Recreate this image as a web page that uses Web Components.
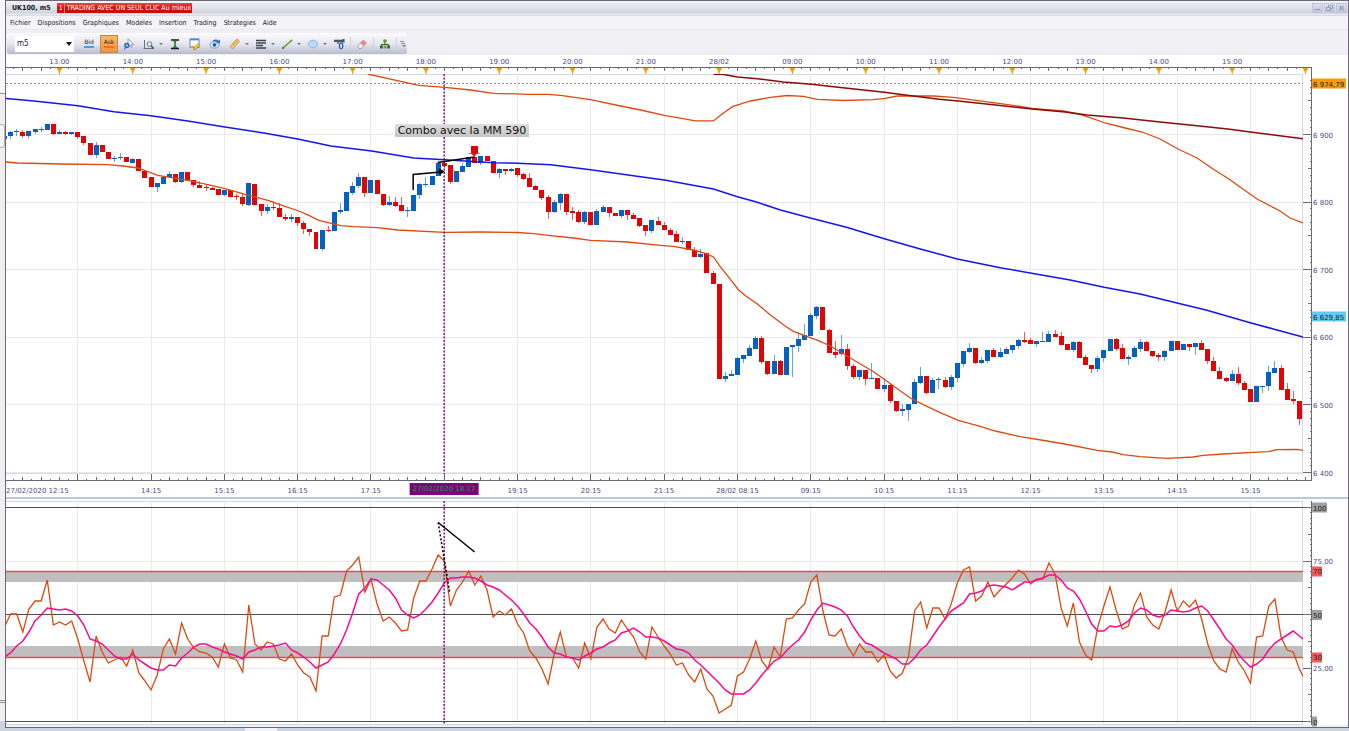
<!DOCTYPE html>
<html lang="fr">
<head>
<meta charset="utf-8">
<title>UK100, m5</title>
<style>
  body {
    margin: 0;
    background: #ccd4e0;
    color: #1c1c24;
    font-family: "DejaVu Sans Condensed", "DejaVu Sans", sans-serif;
    font-size: 7px;
    line-height: 12px;
    --frame: #6c687a;
    --chrome: #f0eff4;
    --axis: #6a6a72;
    --axis-text: #4c4c84;
    --axis-font: 7px "DejaVu Sans", sans-serif;
    --grid: #e9e9e9;
    --plot-border: #d3dae6;
  }
</style>
</head>
<body>
<trading-app>
  <title-bar slot="title" name="UK100, m5" count="1">TRADING AVEC UN SEUL CLIC Au mieux</title-bar>
  <menu-bar slot="menu">
    <a href="#fichier">Fichier</a>
    <a href="#dispositions">Dispositions</a>
    <a href="#graphiques">Graphiques</a>
    <a href="#modeles">Modeles</a>
    <a href="#insertion">Insertion</a>
    <a href="#trading">Trading</a>
    <a href="#strategies">Strategies</a>
    <a href="#aide">Aide</a>
  </menu-bar>
  <tool-bar slot="tools"></tool-bar>
  <price-pane slot="price"></price-pane>
  <oscillator-pane slot="oscillator"></oscillator-pane>
</trading-app>

<script>
// ---- Scales ----------------------------------------------------------

const PLOT_W = 1298;      // horizontal units of a pane
const BAR_0 = -1.5;       // centre of the first bar
const BAR_W = 6.1125;     // one 5 minute bar
const HOUR = BAR_W * 12;

const barX = i => +(BAR_0 + BAR_W * i).toFixed(2);
const pctX = x => (x / PLOT_W * 100).toFixed(3) + '%';

const PRICE_TOP = 74, PRICE_H = 400;
const OSC_TOP = 501, OSC_H = 224;

// ---- Data ------------------------------------------------------------

// direction, body top, body bottom, high, low (pane units)
const CANDLES = `
u136,139,135,139 u132,136,131,139 u131,132,129,136 d132,136,130,138 u131,136,131,139 u129,132,129,134 u129,130,127,132 u124,130
d124,134,124,135 u132,134,130,134 d132,134,131,135 u132,134,132,135 d132,137,132,139 d136,143,136,145 d143,155 u145,155,142,158
d145,152 d152,159 u158,159,156,162 u157,158,153,160 d157,162 u159,163,158,163 d159,171 d171,178 d177,187 u183,187,183,192
u177,184 u174,177,171,177 d174,182,174,183 u172,182,172,183 d172,180 d180,185,180,187 d185,188,181,188 d187,188,185,191
d188,190,187,190 d189,195 u190,195,190,196 d190,197 d196,197,194,200 d197,204,193,206 u183,205,183,206 d184,205 d204,211,204,216
u207,211,204,214 d207,208,201,210 d208,217,203,217 d217,219,214,221 u217,219,214,222 d217,223,217,226 d223,229,221,234
d229,232,229,236 d232,249 u230,249,230,251 d230,231,226,232 u212,231 u210,212,203,214 u192,211 u186,193,182,195 u177,186,173,188
d177,193,177,197 u180,193 d180,194 d194,205,194,206 u202,205,196,206 d202,206,197,207 d205,211,197,211 u210,211,207,217
u195,211 u184,195,183,199 u184,185,177,187 u176,185 u163,176 d163,166,163,168 d165,182,165,184 u171,182 u166,172,163,172
u157,167 d157,163 u156,163,156,165 d156,161 d161,173 u169,173,168,178 d169,171,169,175 u169,171,168,172 d168,175,168,177
d174,179,173,180 d178,187,173,187 d186,190,185,190 d190,198,190,200 d197,212,195,219 u202,212,200,213 u194,203,193,210
d194,212,194,215 d211,213,207,220 d212,222,210,223 u212,222,211,224 d212,225 u211,225,209,225 u207,212,205,212 d207,213,207,217
d213,216 u210,216,210,218 d210,215,210,220 d215,219,213,219 d218,226,218,227 d225,231,225,236 u220,231,220,233 d221,225,217,225
d225,230,222,230 d230,235,228,235 d234,242,231,242 u241,242,237,244 d241,250 d250,257,247,257 u254,257,249,258 d253,273
d273,284,271,284 d284,379 u376,379,372,382 u374,376,370,376 u358,375,357,375 u355,359,355,363 u348,356,345,356 u338,349,336,349
d338,362,336,364 d361,374,361,375 u361,374,355,374 d361,375,360,375 u347,375 u345,347,345,377 u339,346,332,352 u335,340,324,340
u315,336,313,336 u307,316,306,319 d307,330 d330,353,329,353 d352,355,341,358 u349,354,335,356 d349,366,344,370 d366,377,364,379
u370,377,370,380 d370,379,370,385 u378,379,363,379 d378,389 u385,389,378,392 d385,401,383,403 d401,411,401,412 u409,411,404,416
u404,410,404,421 u382,404,379,404 u376,383,367,384 d376,393,376,394 u380,393,378,393 u379,380,377,389 d380,387,377,388
u377,387,375,390 u363,378,363,382 u351,364,351,367 u348,352,343,353 d348,363,348,364 u360,363,357,364 u350,361,350,363
d350,357,348,357 u352,357,348,358 u349,354,347,354 u345,350,345,353 u340,346,339,349 d340,342,332,343 d340,344,338,344
u341,344,341,347 u341,342,332,342 u334,342,331,342 d334,337,330,337 d336,345,332,345 d344,350 u342,350,341,352 d342,358,341,358
d357,365,355,365 d365,369,365,373 u358,369,356,372 u350,358,350,362 u339,351 d339,349,338,351 d348,359,344,359 u357,359,355,365
u348,357,346,357 u342,349,339,352 d342,351,341,351 d351,356,351,357 d355,357,353,361 u351,357,350,361 u341,351 d341,350
u344,350 d344,347,344,351 u343,347,343,355 d343,350,340,350 d349,361,349,364 d361,371,357,371 d371,379,367,379 d378,381,377,382
u374,381,370,381 d374,383,367,385 d383,390,381,390 d389,402 u386,402 u386,387,386,393 u372,386,366,391 u368,373,361,373
d368,390,365,390 d389,400,383,400 d399,401,391,404 d401,419,401,425`
  .trim().split(/\s+/).map(s => {
    const [top, bottom, high = top, low = bottom] = s.slice(1).split(',').map(Number);
    return { up: s[0] === 'u', top, bottom, high, low };
  });

// x,y pairs (pane units)
const AVERAGE_BLUE = '0,98.5 28,101 72,105.7 108,111.7 145,115.7 182,121 219,127 258,133 292,139 325,146 366,151 408,158 439,159.7 488,162.7 512,163.3 545,164.7 585,169.7 635,176.7 659,180 708,189 732,196.7 751,202 775,210 805,218 842,227.5 879,238.7 915,249 952,259 995,267.7 1025,273 1065,280 1099,287.3 1135,294 1172,303 1201,310 1246,323 1271,329.7 1298,337';
const AVERAGE_DARK = '708,74.3 717,74.3 732,77 752,78.7 778,82 806,84.3 842,88.3 879,92.3 898,94.7 934,99.3 953,101 988,104.7 1027,109 1060,112 1082,115 1118,118 1155,122 1192,125.7 1225,129.3 1247,132.3 1298,138.7';
const BAND_UPPER = '362,74 413,85.3 439,87.3 465,90 488,93.3 522,94.3 542,94.3 555,95.3 585,99.7 615,106 635,110 659,115.3 690,120.9 708,120.9 717,113.7 727,106.7 745,101 765,97.3 782,95.5 798,96.3 812,99.3 838,100.5 868,99.7 880,98.3 892,96 928,96 948,97.3 988,102.7 1008,105.3 1027,108.5 1058,111 1073,114 1082,116.7 1100,123 1120,128 1137,132 1155,139 1173,149 1192,158 1208,169 1225,179.7 1235,187 1252,199 1275,211 1285,218 1298,223';
const BAND_LOWER = '0,162 12,163 55,164 102,164.7 117,166 132,168 152,175.3 182,180.3 202,184.7 219,188.7 243,195.3 262,200.3 277,205.7 293,211 303,215.3 313,220.3 335,225.7 348,226.7 372,227.7 392,230 439,232.3 475,232 512,232.5 528,233.7 545,235.7 568,238 585,240.3 622,242 655,245.3 668,246.3 688,250 700,253.3 708,257 714,265.7 722,275.7 733,289.7 740,295.7 752,304 765,315 780,326.3 788,331.3 802,336.7 813,340.7 825,346 843,356.7 855,364 867,371 880,380 892,388.7 905,398 918,404.7 935,412.7 953,420.3 975,426.3 990,431 1015,436.7 1042,441 1065,445 1092,450.3 1107,452 1118,454.7 1135,456.7 1162,458.3 1188,457 1198,455.3 1218,454 1248,452.3 1263,451.7 1272,449.7 1292,449.3 1298,450.3';

// one value per bar
const OSC_FAST = [
  627,614,614,632,609,601,601,580,625,622,625,621,639,661,682,636,652,663,660,657,666,650,673,681,690,675,649,639,654,623,
  639,648,652,653,657,667,644,658,660,672,605,644,650,642,644,659,661,654,665,673,677,691,636,636,597,595,571,565,557,592,
  579,604,621,617,623,631,630,598,581,581,569,555,561,606,590,582,571,585,576,590,617,611,615,609,624,633,651,658,669,684,
  654,632,657,658,668,643,659,627,619,629,633,620,629,637,652,659,627,637,646,654,665,663,675,682,669,689,696,713,709,705,
  676,672,659,641,661,669,647,657,619,618,610,604,582,575,611,635,636,629,646,656,644,652,652,662,655,671,678,673,657,611,
  602,628,608,608,619,604,583,570,567,601,596,582,597,590,584,578,570,574,584,579,579,563,574,608,626,603,642,655,660,627,
  606,587,610,629,626,605,593,617,625,629,612,590,611,601,607,600,619,644,661,669,672,649,662,671,683,637,636,606,599,637,
  650,652,669,681];
const OSC_SLOW = [
  657,653,646,641,632,621,615,608,609,610,609,611,616,625,639,641,644,650,656,659,659,654,660,664,668,670,670,665,666,658,
  653,647,644,644,647,649,652,654,656,659,652,650,647,647,646,645,643,650,653,657,662,668,665,662,654,644,630,613,594,588,
  579,580,585,590,598,610,615,618,615,609,602,593,583,578,578,577,577,578,581,585,587,590,595,600,606,614,623,629,637,647,
  653,654,657,658,660,656,653,649,647,643,640,633,631,628,632,637,637,638,641,645,649,650,653,660,665,671,677,683,690,694,
  694,694,690,683,675,668,661,658,651,645,640,632,620,610,603,605,607,610,616,627,636,643,645,649,653,656,659,664,664,658,
  650,645,636,627,619,611,607,603,594,593,591,586,585,586,587,590,586,582,582,580,578,575,575,580,588,591,599,611,624,631,
  631,626,627,625,621,613,608,610,615,617,615,610,611,612,611,608,606,611,620,629,639,645,654,661,667,664,659,650,643,639,
  635,631,636,641];

const series = values => values.map((y, i) => `${barX(i)},${y}`).join(' ');

const verticalGrid = (top, height) => {
  let out = '';
  for (let h = 1; h < 18; h++) {
    const x = barX(h * 12);
    out += `<line class="grid" x1="${x}" x2="${x}" y1="${top}" y2="${top + height}"/>`;
  }
  return out;
};

const PLOT_STYLE = `
  :host { display: grid; grid-template-columns: minmax(0, 1fr) 45px; background: #fff; min-height: 0; }
  .plot {
    position: relative; min-height: 0; overflow: hidden; box-sizing: border-box;
    box-shadow: inset -1px 0 var(--plot-border), inset 0 1px var(--plot-border), inset 0 -1px var(--plot-border);
  }
  .plot svg { position: absolute; width: 100%; height: 100%; }
  line, polyline { fill: none; vector-effect: non-scaling-stroke; }
  .grid { stroke: var(--grid); shape-rendering: crispEdges; }
  .cursor { stroke: #800080; stroke-width: 1.4; stroke-dasharray: 2 1.5; }
  .band { stroke: #dc4a10; stroke-width: 1.3; }
  .ink { stroke: #000; stroke-width: 1.5; }
`;

// ---- Window chrome ---------------------------------------------------

class TradingApp extends HTMLElement {
  constructor() {
    super();
    this.attachShadow({ mode: 'open' });
    this.shadowRoot.innerHTML = `
      <style>
        :host {
          display: grid;
          grid-template: minmax(0, 1fr) 3px / 5px minmax(0, 1fr);
          height: 100vh;
          min-height: 420px;
        }
        .edge { display: flex; flex-direction: column; background: #efeff1; }
        .edge i { flex: 93 1 0; background: #f8f8fa; }
        .edge i + i { flex-grow: 30; border-top: 1px solid #8f8f95; background: #efeff1; }
        .edge i.grip { flex-grow: 22; border: 1px solid #b4b4b8; border-left: 0; border-radius: 0 3px 3px 0; background: #f6f6f7; }
        .edge i.rest { flex-grow: 554; border: 0; }
        .edge i.foot { flex-grow: 18; border-top: 3px double #8f8f95; }
        .edge i.end { flex-grow: 7; border: 0; background: #ccd4e0; }
        .window {
          display: flex; flex-direction: column; min-height: 0;
          border: 1px solid var(--frame);
          background: #fff;
        }
        .splitter { flex: none; height: 4px; background: linear-gradient(#b9c9da 2px, #fff 2px); }
        .bottom { flex: none; height: 2px; background: #eef1f6; }
        .status { grid-column: 1 / -1; display: flex; background: #ccd4e0; }
        .status i { width: 32px; margin-left: 245px; background: #f2f4f8; }
        ::slotted([slot=price]) { flex: 442 1 0; }
        ::slotted([slot=oscillator]) { flex: 224 1 0; }
      </style>
      <div class="edge"><i></i><i></i><i class="grip"></i><i class="rest"></i><i class="foot"></i><i class="end"></i></div>
      <main class="window">
        <slot name="title"></slot>
        <slot name="menu"></slot>
        <slot name="tools"></slot>
        <slot name="price"></slot>
        <div class="splitter"></div>
        <slot name="oscillator"></slot>
        <div class="bottom"></div>
      </main>
      <div class="status"><i></i></div>
    `;
  }
}

class TitleBar extends HTMLElement {
  constructor() {
    super();
    this.attachShadow({ mode: 'open' });
    this.shadowRoot.innerHTML = `
      <style>
        :host {
          display: flex; align-items: center; gap: 6px; flex: none;
          height: 14px; padding: 0 1px 0 6px;
          background: linear-gradient(#f4f4f8, #cfd4df 85%, #f0f0f5);
          border-bottom: 1px solid #d9dce4;
        }
        h1 { margin: 0; font-size: 7px; font-weight: bold; color: #15151c; }
        button { font: inherit; border: 0; padding: 0; }
        .oneclick {
          display: flex; align-items: center; gap: 2px;
          height: 10px; padding: 0 1px 0 0;
          background: linear-gradient(#e8473f, #d41212 50%, #c80c0c);
          color: #fff; line-height: 10px;
        }
        .oneclick b { padding: 0 1px 0 2px; border-right: 1px solid #f0807a; font-weight: normal; }
        .controls { display: flex; margin-left: auto; }
        .controls button {
          width: 11px; height: 10px; margin-left: 1px;
          background: linear-gradient(#dfe2ee, #bfc4d8); border: 1px solid #c2c6d8;
        }
        svg { display: block; margin: auto; fill: none; stroke: #969ab4; }
      </style>
      <h1>${this.getAttribute('name')}</h1>
      <button class="oneclick"><b>${this.getAttribute('count')}</b><slot></slot></button>
      <div class="controls">
        <button aria-label="Minimiser"><svg width="7" height="6"><path d="M1 4.500h5"/></svg></button>
        <button aria-label="Restaurer"><svg width="7" height="6"><path d="M2.500 2V.5h4v3H5M.5 2.500h4v3h-4z"/></svg></button>
        <button aria-label="Fermer"><svg width="7" height="6"><path d="M1.500 1l4 4m0-4l-4 4" stroke-width="1.300"/></svg></button>
      </div>
    `;
  }
}

class MenuBar extends HTMLElement {
  constructor() {
    super();
    this.attachShadow({ mode: 'open' });
    this.shadowRoot.innerHTML = `
      <style>
        :host { display: block; flex: none; background: #f4f3f7; border-bottom: 1px solid #ebeaf0; }
        nav { display: flex; align-items: center; gap: 7px; height: 13px; padding-left: 4px; }
        ::slotted(a) { color: #1c1c24; text-decoration: none; }
      </style>
      <nav><slot></slot></nav>
    `;
  }
}

// ---- Toolbar ---------------------------------------------------------

const ICONS = {
  pointer: '<path d="M5 .8v8l2-1.800 1 2.500 1.200-.6-1-2.300h2.600z" fill="#f4f4f8" stroke="#8c90a4" stroke-width=".8"/><circle cx="3.800" cy="7.500" r="2" fill="#9cc0ee" stroke="#2b62b8" stroke-width="1.300"/><path d="M2.500 9.500L1.300 11.500" stroke="#2b62b8"/>',
  zoom: '<path d="M1.500 2v9M.5 10.500h10.500" stroke="#6a6f7a" fill="none"/><circle cx="6.500" cy="6" r="2.300" fill="#dcecf4" stroke="#6d7888"/><path d="M8.300 8l2 2.200" stroke="#384050" stroke-width="1.400"/>',
  scale: '<path d="M2 2h8M2 10.500h8" stroke="#141c14" stroke-width="1.600"/><path d="M4.500 3h3L6.800 5v2.500L8.500 10h-5l1.700-2.500V5z" fill="#2f7d3c"/>',
  note: '<rect x="1" y="1" width="9" height="8.500" fill="#fff" stroke="#4b7fc8" stroke-width=".9"/><path d="M1 1.500h9" stroke="#5a8cd0" stroke-width="1.800"/><path d="M1.500 8.500h4" stroke="#f0b440" stroke-width="2"/><path d="M5 9.800l4-4.300 1.800 1.800-4 4-2.200.5z" fill="#f7c531" stroke="#a87510" stroke-width=".6"/>',
  refresh: '<ellipse cx="5.500" cy="6.800" rx="4.500" ry="3.300" fill="#dbe9fa" stroke="#7c9cc8"/><circle cx="5.500" cy="6.800" r="1.900" fill="#2a5aa4"/><path d="M3 3.200C6 .8 8 1.200 9.500 2.800L11 1.200V5.200H7l1.400-1.400" fill="#3a6cb8"/>',
  ruler: '<path d="M1 8.500L8 1l2.500 2.200L3.500 11z" fill="#f4c37a" stroke="#c98932" stroke-width=".8"/><path d="M3.500 6l1 1M5.200 4.300l1 1M7 2.500l1 1" stroke="#9a6420" stroke-width=".7"/>',
  levels: '<path d="M1 2.500h10M1 5h10M1 7.500h7M1 10h10" stroke="#3a4450" stroke-width="1.400"/>',
  trend: '<path d="M2 10L10.500 2.500" stroke="#5aa022" stroke-width="1.500"/><circle cx="2" cy="10" r=".9" fill="#2f6c10"/><circle cx="10.500" cy="2.500" r=".9" fill="#5aa022"/>',
  ellipse: '<ellipse cx="6" cy="6" rx="4.700" ry="3.700" fill="#b9dcf4" stroke="#88b8e0"/>',
  hammer: '<path d="M1 2.800h9M10.500 1v3.500" stroke="#50545c" stroke-width="2.200"/><path d="M5 4v2" stroke="#596070" stroke-width="1.500"/><rect x="6.500" y="5" width="3.200" height="5.500" rx="1.500" fill="#dbe8fa" stroke="#2d5eb0" stroke-width="1.300"/>',
  eraser: '<path d="M1.500 8L7 2.200l3.500 2.600L5.500 10.500H3z" fill="#f3e9ee" stroke="#a48c98" stroke-width=".7"/><path d="M4.200 5.200L7.200 2.100l3.300 2.600-2.900 3.200z" fill="#e48a94"/>',
  tree: '<path d="M6 4v3M2.500 8V6.500h7V8" stroke="#3c5a2c" fill="none"/><circle cx="6" cy="3" r="1.800" fill="#5d9a30"/><rect x="1" y="7.500" width="2.800" height="3" fill="#2f6e24"/><rect x="4.600" y="7.500" width="2.800" height="3" fill="#6aa52c"/><rect x="8.200" y="7.500" width="2.800" height="3" fill="#2f6e24"/>',
};

class ToolButton extends HTMLElement {
  constructor() {
    super();
    this.attachShadow({ mode: 'open' });
    const icon = ICONS[this.getAttribute('icon')];
    const label = this.getAttribute('label');
    this.shadowRoot.innerHTML = `
      <style>
        :host { display: flex; align-items: center; }
        button { padding: 0; border: 0; background: none; font: inherit; color: #22242c; }
        .main {
          display: flex; flex-direction: column; align-items: center; justify-content: center;
          box-sizing: border-box; width: 18px; height: 18px;
        }
        :host([pressed]) .main { background: linear-gradient(#ffb765, #f8933a); border: 1px solid #b08d5c; }
        svg { display: block; }
        .caret { width: 6px; height: 18px; }
        .caret svg { margin: 0 auto; }
        .quote { font: 6px/6px "DejaVu Sans", sans-serif; }
        .quote::after { content: ""; display: block; height: 2px; margin-top: 1px; background: var(--bar, #4b9be8); }
        :host([pressed]) .quote { --bar: #fb6a1c; }
      </style>
      <button class="main" aria-label="${label}">${icon
        ? `<svg width="12" height="12" viewBox="0 0 12 12" fill="none">${icon}</svg>`
        : `<span class="quote">${label}</span>`}</button>
      ${this.hasAttribute('menu')
        ? '<button class="caret" aria-label="Options"><svg width="4" height="2"><path d="M0 0h4L2 2z" fill="#70748c"/></svg></button>'
        : ''}
    `;
  }
}

class ToolBar extends HTMLElement {
  constructor() {
    super();
    this.attachShadow({ mode: 'open' });
    this.shadowRoot.innerHTML = `
      <style>
        :host { display: flex; flex: none; box-sizing: border-box; height: 25px; padding: 3px 1px 1px; background: var(--chrome); }
        .bar {
          display: flex; align-items: center; gap: 2px; box-sizing: border-box; padding: 0 0 0 8px;
          background: linear-gradient(#fcfcfe, #e4e4ee 55%, #b9bbce); border-radius: 2px;
        }
        .period { display: grid; grid-template-columns: 49px 10px; align-items: center; margin-right: 4px; }
        select {
          grid-area: 1 / 1 / 2 / 3; appearance: none; box-sizing: border-box; height: 16px; width: 100%;
          border: 0; padding: 0 0 0 2px; background: #fff; color: #20202c; font: inherit; font-size: 8px;
        }
        .period svg { grid-area: 1 / 2; margin-left: 2px; pointer-events: none; }
        hr { width: 1px; height: 14px; margin: 0; border: 0; background: #d0d1de; }
        .more { width: 8px; padding: 0; border: 0; background: none; }
        .more svg { display: block; margin: auto; }
      </style>
      <div class="bar" role="toolbar" aria-label="Outils">
        <label class="period">
          <select aria-label="Période"><option>m5</option><option>m15</option><option>H1</option></select>
          <svg width="6" height="4"><path d="M0 0h6L3 4z" fill="#16161c"/></svg>
        </label>
        <tool-button label="Bid"></tool-button>
        <tool-button label="Ask" pressed></tool-button>
        <tool-button icon="pointer" label="Curseur"></tool-button>
        <tool-button icon="zoom" label="Zoom" menu></tool-button>
        <tool-button icon="scale" label="Echelle"></tool-button>
        <tool-button icon="note" label="Note"></tool-button>
        <tool-button icon="refresh" label="Actualiser"></tool-button>
        <tool-button icon="ruler" label="Mesure" menu></tool-button>
        <tool-button icon="levels" label="Niveaux" menu></tool-button>
        <tool-button icon="trend" label="Ligne" menu></tool-button>
        <tool-button icon="ellipse" label="Formes" menu></tool-button>
        <tool-button icon="hammer" label="Texte"></tool-button>
        <hr>
        <tool-button icon="eraser" label="Effacer"></tool-button>
        <hr>
        <tool-button icon="tree" label="Objets"></tool-button>
        <hr>
        <button class="more" aria-label="Plus"><svg width="6" height="8"><path d="M0 1.500h4M1 3.500h4" stroke="#8a8ca0"/><path d="M2 5h4L4 7z" fill="#70748c"/></svg></button>
      </div>
    `;
  }
}

// ---- Axes ------------------------------------------------------------

// side="top" has the full hours, side="bottom" the quarter past and the cursor's time
class TimeAxis extends HTMLElement {
  constructor() {
    super();
    this.attachShadow({ mode: 'open' });
    const top = this.getAttribute('side') === 'top';
    this.shadowRoot.innerHTML = `
      <style>
        :host { display: block; position: relative; height: ${top ? 19 : 23}px; }
        svg { display: block; width: 100%; height: 100%; overflow: visible; }
        line { stroke: var(--axis); shape-rendering: crispEdges; }
        text { font: var(--axis-font); fill: var(--axis-text); text-anchor: middle; }
        text.first { text-anchor: start; }
        path { fill: #f39c12; }
        .cursor {
          position: absolute; top: 9px; left: ${pctX(438.5)}; transform: translateX(-50%);
          padding: 0 3px; background: #800080; color: #1f9a3c; font: var(--axis-font); line-height: 12px; white-space: nowrap;
        }
      </style>
      <svg>${top ? this.hours() : this.quarters()}</svg>
      ${top ? '' : '<span class="cursor">27/02/2020 18:17</span>'}
    `;
  }

  hours() {
    const labels = ['13:00', '14:00', '15:00', '16:00', '17:00', '18:00', '19:00', '20:00', '21:00', '28/02',
      '09:00', '10:00', '11:00', '12:00', '13:00', '14:00', '15:00'];
    let out = '<line x1="0" x2="100%" y1="12.5" y2="12.5"/><svg x="100%" overflow="visible"><line x1="0" x2="9" y1="12.5" y2="12.5"/></svg>';
    for (let n = -5; n <= 136; n++) {
      const x = pctX(barX(9) + n * HOUR / 8);
      out += `<line x1="${x}" x2="${x}" y1="12" y2="${n % 2 ? 14 : 16}"/>`;
    }
    for (let h = 0; h <= 17; h++) {
      const x = pctX(barX(9) + h * HOUR);
      out += `<svg x="${x}" overflow="visible"><path d="M-3 13h6L.6 17V19h-1.200V17z"/></svg>`;
      if (labels[h]) out += `<text x="${x}" y="9">${labels[h]}</text>`;
    }
    return out;
  }

  quarters() {
    const labels = { 2: '14:15', 3: '15:15', 4: '16:15', 5: '17:15', 7: '19:15', 8: '20:15', 9: '21:15', 10: '28/02 08:15',
      11: '09:15', 12: '10:15', 13: '11:15', 14: '12:15', 15: '13:15', 16: '14:15', 17: '15:15' };
    let out = '<line x1="0" x2="100%" y1="6.5" y2="6.5"/><svg x="100%" overflow="visible"><line x1="0" x2="9" y1="6.5" y2="6.5"/></svg>';
    for (let n = 1; n <= 142; n++) {
      const x = pctX(barX(0) + n * HOUR / 8);
      out += `<line x1="${x}" x2="${x}" y1="${n % 8 ? n % 2 ? 5 : 3 : 0}" y2="7"/>`;
    }
    for (const h in labels) out += `<text x="${pctX(barX(h * 12))}" y="19">${labels[h]}</text>`;
    return out + '<text class="first" x="0" y="19">27/02/2020 12:15</text>';
  }
}

// scale="top,height,first major,major gap,minor ticks per major"
class ValueAxis extends HTMLElement {
  connectedCallback() {
    if (this.shadowRoot) return;
    this.attachShadow({ mode: 'open' });
    const [top, height, first, gap, minor] = this.getAttribute('scale').split(',').map(Number);
    const labels = this.getAttribute('labels').split('|');
    const pct = y => ((y - top) / height * 100).toFixed(3) + '%';
    let out = '<line x1="8.5" x2="8.5" y1="0" y2="100%"/>';
    if (this.hasAttribute('joined')) {
      out += '<line x1="8.5" x2="8.5" y1="-7" y2="0"/><svg y="100%" overflow="visible"><line x1="8.5" x2="8.5" y1="0" y2="7"/></svg>';
    }
    for (let n = -minor; n <= minor * labels.length; n++) {
      const y = first + n * gap / minor;
      if (y < top + 4 || y > top + height) continue;
      const from = n % minor === 0 ? 0 : n % (minor / 2) === 0 ? 5 : 7;
      out += `<line x1="${from}" x2="9" y1="${pct(y)}" y2="${pct(y)}"/>`;
    }
    labels.forEach((text, n) => {
      if (text) out += `<svg y="${pct(first + n * gap)}" overflow="visible"><text x="10" y="3">${text}</text></svg>`;
    });
    for (const tag of JSON.parse(this.getAttribute('tags') || '[]')) {
      out += `<svg y="${pct(tag.y)}" overflow="visible">
        <rect x="9" y="-5" width="${tag.w}" height="10" fill="${tag.fill}"/>
        <text x="10" y="3" class="tag">${tag.text}</text></svg>`;
    }
    this.shadowRoot.innerHTML = `
      <style>
        :host { display: block; position: relative; }
        svg { overflow: visible; }
        .axis { position: absolute; width: 100%; height: 100%; }
        line { stroke: var(--axis); shape-rendering: crispEdges; }
        text { font: var(--axis-font); fill: var(--axis-text); }
        .tag { fill: #1c1c1c; }
      </style>
      <svg class="axis">${out}</svg>
    `;
  }
}

// ---- Panes -----------------------------------------------------------

class PricePane extends HTMLElement {
  constructor() {
    super();
    this.attachShadow({ mode: 'open' });
    const tags = [
      { y: 83.5, w: 34, fill: '#ff9a00', text: '6 974,79' },
      { y: 316.5, w: 34, fill: '#66c8fa', text: '6 629,85' },
    ];
    this.shadowRoot.innerHTML = `
      <style>
        ${PLOT_STYLE}
        :host { grid-template-rows: 19px minmax(0, 1fr) 23px; }
        .plot { grid-area: 2 / 1; }
        value-axis { grid-area: 2 / 2; }
        time-axis[side=top] { grid-area: 1 / 1; }
        time-axis[side=bottom] { grid-area: 3 / 1; }
        .up { fill: #0560c4; } .down { fill: #e00404; }
        .wick { shape-rendering: crispEdges; }
        .wick.up { stroke: #6aa2dc; } .wick.down { stroke: #ec5c5c; }
        rect { shape-rendering: crispEdges; }
        .bid { stroke: #8c8c8c; stroke-dasharray: 2 2; shape-rendering: crispEdges; }
        .blue { stroke: #1414f4; stroke-width: 1.5; }
        .dark { stroke: #8c0a0a; stroke-width: 1.6; }
        .note {
          position: absolute; left: ${pctX(389)}; top: 12.500%;
          padding: 0 3px; background: linear-gradient(#dedede, #c4c4c4); color: #101010;
          font: 11px/13px "DejaVu Sans", sans-serif; white-space: nowrap;
        }
      </style>
      <time-axis side="top"></time-axis>
      <div class="plot">
        <svg viewBox="0 ${PRICE_TOP} ${PLOT_W} ${PRICE_H}" preserveAspectRatio="none">
          ${[134.5, 202.5, 269.5, 337.5, 404.5, 472.5].map(y => `<line class="grid" x1="0" x2="${PLOT_W}" y1="${y}" y2="${y}"/>`).join('')}
          ${verticalGrid(PRICE_TOP, PRICE_H)}
          <line class="bid" x1="0" x2="${PLOT_W}" y1="83.5" y2="83.5"/>
          ${CANDLES.map((c, i) => this.candle(c, barX(i))).join('')}
          <polyline class="band" points="${BAND_UPPER}"/>
          <polyline class="band" points="${BAND_LOWER}"/>
          <polyline class="blue" points="${AVERAGE_BLUE}"/>
          <polyline class="dark" points="${AVERAGE_DARK}"/>
          <line class="cursor" x1="438.5" x2="438.5" y1="${PRICE_TOP}" y2="${PRICE_TOP + PRICE_H}"/>
          <polyline class="ink" points="407.5,190 407.5,174.500 435,172"/>
          <path d="M433 168L439 171.500L434 175z"/>
          <polyline class="ink" points="432,162.500 469,157"/>
          <rect class="down" x="465" y="146" width="7" height="8"/>
          <path d="M463 153.500h11" stroke="#a05050" stroke-width=".8"/>
          <path d="M466 154h5L468.500 156.500z" fill="#e00404"/>
        </svg>
        <span class="note">Combo avec la MM 590</span>
      </div>
      <value-axis joined scale="${PRICE_TOP},${PRICE_H},134.5,67.6,10"
        labels="6 900|6 800|6 700|6 600|6 500|6 400" tags='${JSON.stringify(tags)}'></value-axis>
      <time-axis side="bottom"></time-axis>
    `;
  }

  candle({ up, top, bottom, high, low }, x) {
    const cls = up ? 'up' : 'down';
    return `<line class="wick ${cls}" x1="${x}" x2="${x}" y1="${high}" y2="${low}"/>` +
      `<rect class="${cls}" x="${(x - 2.5).toFixed(2)}" y="${top}" width="5" height="${bottom - top}"/>`;
  }
}

class OscillatorPane extends HTMLElement {
  constructor() {
    super();
    this.attachShadow({ mode: 'open' });
    const tags = [
      { y: 507.5, w: 15, fill: '#a0a0a0', text: '100' },
      { y: 571.5, w: 10, fill: '#f45a5a', text: '70' },
      { y: 615, w: 10, fill: '#a0a0a0', text: '50' },
      { y: 657.5, w: 10, fill: '#f45a5a', text: '30' },
      { y: 721.5, w: 5, fill: '#a0a0a0', text: '0' },
    ];
    const across = (cls, y) => `<line class="${cls}" x1="0" x2="${PLOT_W}" y1="${y}" y2="${y}"/>`;
    this.shadowRoot.innerHTML = `
      <style>
        ${PLOT_STYLE}
        .zone { fill: #bfbfbf; }
        .limit { stroke: #f04848; stroke-width: 1.4; }
        .level { stroke: #4c4c4c; shape-rendering: crispEdges; }
        .signal { stroke: #fc0a90; stroke-width: 1.5; }
        .dotted { stroke-dasharray: 2 2; }
      </style>
      <div class="plot">
        <svg viewBox="0 ${OSC_TOP} ${PLOT_W} ${OSC_H}" preserveAspectRatio="none">
          ${across('grid', 561.5)}${across('grid', 668.5)}
          ${verticalGrid(OSC_TOP, OSC_H)}
          <rect class="zone" x="0" y="571" width="${PLOT_W}" height="11"/>
          <rect class="zone" x="0" y="646" width="${PLOT_W}" height="11"/>
          ${across('limit', 571.5)}${across('limit', 657.5)}
          ${across('level', 507.5)}${across('level', 614.5)}${across('level', 721.5)}
          <polyline class="band" points="${series(OSC_FAST)}"/>
          <polyline class="signal" points="${series(OSC_SLOW)}"/>
          <line class="cursor" x1="438.5" x2="438.5" y1="${OSC_TOP}" y2="${OSC_TOP + OSC_H}"/>
          <line class="ink" x1="432.500" x2="469" y1="522.500" y2="552"/>
          <line class="ink dotted" x1="432.500" x2="444" y1="522.500" y2="592"/>
        </svg>
      </div>
      <value-axis scale="${OSC_TOP},${OSC_H},507.5,53.5,10" labels="|75,00||25,00|" tags='${JSON.stringify(tags)}'></value-axis>
    `;
  }
}

customElements.define('tool-button', ToolButton);
customElements.define('tool-bar', ToolBar);
customElements.define('time-axis', TimeAxis);
customElements.define('value-axis', ValueAxis);
customElements.define('price-pane', PricePane);
customElements.define('oscillator-pane', OscillatorPane);
customElements.define('title-bar', TitleBar);
customElements.define('menu-bar', MenuBar);
customElements.define('trading-app', TradingApp);
</script>
</body>
</html>
